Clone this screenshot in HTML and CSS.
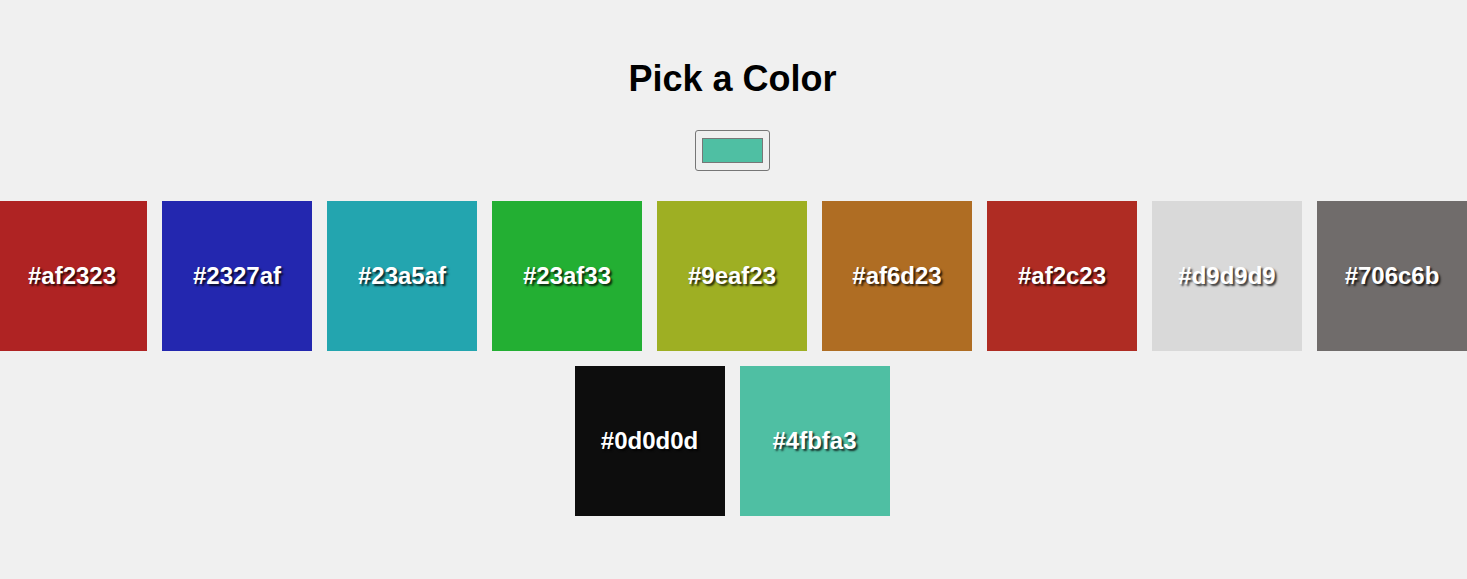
FILE: index.html
```html
<!DOCTYPE html>
<html lang="en">
<head>
<meta charset="utf-8">
<title>Pick a Color</title>
<link rel="stylesheet" href="styles.css">
</head>
<body>
<main class="page">
  <h1 class="title">Pick a Color</h1>
  <input class="picker" type="color" value="#4fbfa3">
  <div class="swatches">
    <div class="swatch" style="background:#af2323">#af2323</div>
    <div class="swatch" style="background:#2327af">#2327af</div>
    <div class="swatch" style="background:#23a5af">#23a5af</div>
    <div class="swatch" style="background:#23af33">#23af33</div>
    <div class="swatch" style="background:#9eaf23">#9eaf23</div>
    <div class="swatch" style="background:#af6d23">#af6d23</div>
    <div class="swatch" style="background:#af2c23">#af2c23</div>
    <div class="swatch" style="background:#d9d9d9">#d9d9d9</div>
    <div class="swatch" style="background:#706c6b">#706c6b</div>
    <div class="swatch" style="background:#0d0d0d">#0d0d0d</div>
    <div class="swatch" style="background:#4fbfa3">#4fbfa3</div>
  </div>
</main>
</body>
</html>
```

FILE: styles.css
```css
html, body {
  margin: 0;
  padding: 0;
  background: #f0f0f0;
  font-family: "Liberation Sans", Arial, sans-serif;
  overflow: hidden;
}

.page {
  display: flex;
  flex-direction: column;
  align-items: center;
  width: 1465px;
  padding-top: 58px;
}

.title {
  margin: 0 0 30px;
  font-size: 36px;
  font-weight: bold;
  color: #000;
  line-height: normal;
}

.picker {
  box-sizing: border-box;
  width: 75px;
  height: 41px;
  padding: 7px 6px;
  margin: 0 0 30px;
  border: 1px solid #767676;
  border-radius: 3px;
  background: #efefef;
  cursor: pointer;
}

.picker::-webkit-color-swatch-wrapper {
  padding: 0;
}

.picker::-webkit-color-swatch {
  border: 1px solid #777;
  border-radius: 0;
}

.swatches {
  display: flex;
  flex-wrap: wrap;
  justify-content: center;
  gap: 15px;
  width: 1470px;
  margin-left: -3px;
  align-self: flex-start;
}

.swatch {
  width: 150px;
  height: 150px;
  display: flex;
  align-items: center;
  justify-content: center;
  color: #fff;
  font-size: 24px;
  font-weight: bold;
  text-shadow: 2px 2px 2px rgba(0, 0, 0, 0.75);
}
```
